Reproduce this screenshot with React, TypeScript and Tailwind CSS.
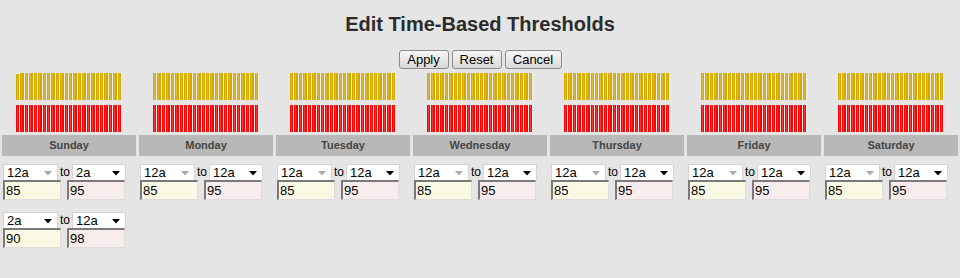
import React from "react";

const days = ["Sunday", "Monday", "Tuesday", "Wednesday", "Thursday", "Friday", "Saturday"];

type Row = { from: string; to: string; warn: string; crit: string; fromDisabled?: boolean };

const rowsFor = (d: string): Row[] =>
  d === "Sunday"
    ? [
        { from: "12a", to: "2a", warn: "85", crit: "95", fromDisabled: true },
        { from: "2a", to: "12a", warn: "90", crit: "98" },
      ]
    : [{ from: "12a", to: "12a", warn: "85", crit: "95", fromDisabled: true }];

function Bars({ color, first }: { color: string; first?: boolean }) {
  const step = 106 / 24;
  return (
    <svg width="106" height="27" viewBox="0 0 106 27" className="block">
      <rect x="0" y="0" width="106" height="27" fill="#f2f2f2" />
      {Array.from({ length: 24 }).map((_, i) => {
        const x = Math.round(i * step);
        const nx = Math.round((i + 1) * step);
        const y = first && i === 0 ? 1 : 0;
        return (
          <g key={i}>
            <rect x={x} y={y} width={nx - x - 1} height={27 - y} fill={color} />
            <rect x={x + 1} y={y} width={1} height={27 - y} fill="#ffffff" opacity="0.2" />
          </g>
        );
      })}
    </svg>
  );
}

function Sel({ value, disabled, w }: { value: string; disabled?: boolean; w: string }) {
  return (
    <div
      className={`${w} relative h-[16px] bg-white border border-[#d4d4d4] border-b-0 flex items-center pl-[3px] text-[13px] leading-[16px] text-black`}
    >
      {value}
      <svg width="8" height="5" viewBox="0 0 8 5" className="absolute right-[5px] top-[6px]">
        <polygon points="0,0 8,0 4,4.5" fill={disabled ? "#aaaaaa" : "#000000"} />
      </svg>
    </div>
  );
}

function Inp({ value, bg }: { value: string; bg: string }) {
  return (
    <div
      className={`w-[58px] h-[20px] ${bg} border-t-2 border-l-2 border-r border-b border-t-[#7a7a7a] border-l-[#7a7a7a] border-r-[#dcdcdc] border-b-[#dcdcdc] text-[13px] leading-[17px] pl-[1px] text-black`}
    >
      {value}
    </div>
  );
}

function RowView({ r }: { r: Row }) {
  return (
    <div className="flex flex-col">
      <div className="flex items-start">
        <Sel value={r.from} disabled={r.fromDisabled} w="w-[55px]" />
        <span className="w-[14px] text-center text-[12px] leading-[16px] text-black">to</span>
        <Sel value={r.to} w="w-[54px]" />
      </div>
      <div className="flex items-start gap-[6px]">
        <Inp value={r.warn} bg="bg-[#fafae4]" />
        <Inp value={r.crit} bg="bg-[#f9ecec]" />
      </div>
    </div>
  );
}

export default function App() {
  return (
    <div
      className="w-[960px] h-[278px] bg-[#e5e5e5] overflow-hidden"
      style={{ fontFamily: '"Liberation Sans", Arial, sans-serif' }}
    >
      <h1 className="pt-[12px] text-center text-[20px] leading-[24px] font-bold text-[#2b2b2b]">
        Edit Time-Based Thresholds
      </h1>
      <div className="mt-[14px] flex justify-center gap-[3px]">
        {[
          ["Apply", "w-[50px]"],
          ["Reset", "w-[50px]"],
          ["Cancel", "w-[57px]"],
        ].map(([t, w]) => (
          <button
            key={t}
            className={`${w} h-[19px] rounded-[3px] border border-[#8a8a8a] bg-gradient-to-b from-[#f6f6f6] to-[#dadada] text-[13px] leading-[17px] text-black`}
          >
            {t}
          </button>
        ))}
      </div>
      <div className="mt-[4px] pl-[2px] flex gap-[3px]">
        {days.map((d, di) => (
          <div key={d} className="w-[134px] flex flex-col">
            <div className="flex flex-col items-center">
              <Bars color="#d5a900" first={di === 0} />
              <div className="h-[5px]" />
              <Bars color="#ff0000" />
            </div>
            <div className="mt-[3px] h-[21px] bg-[#b8b8b8] flex items-center justify-center text-[11px] font-bold text-[#454545]">
              {d}
            </div>
            <div className="mt-[8px] pl-[1px] flex flex-col gap-[12px]">
              {rowsFor(d).map((r, i) => (
                <RowView key={i} r={r} />
              ))}
            </div>
          </div>
        ))}
      </div>
    </div>
  );
}
